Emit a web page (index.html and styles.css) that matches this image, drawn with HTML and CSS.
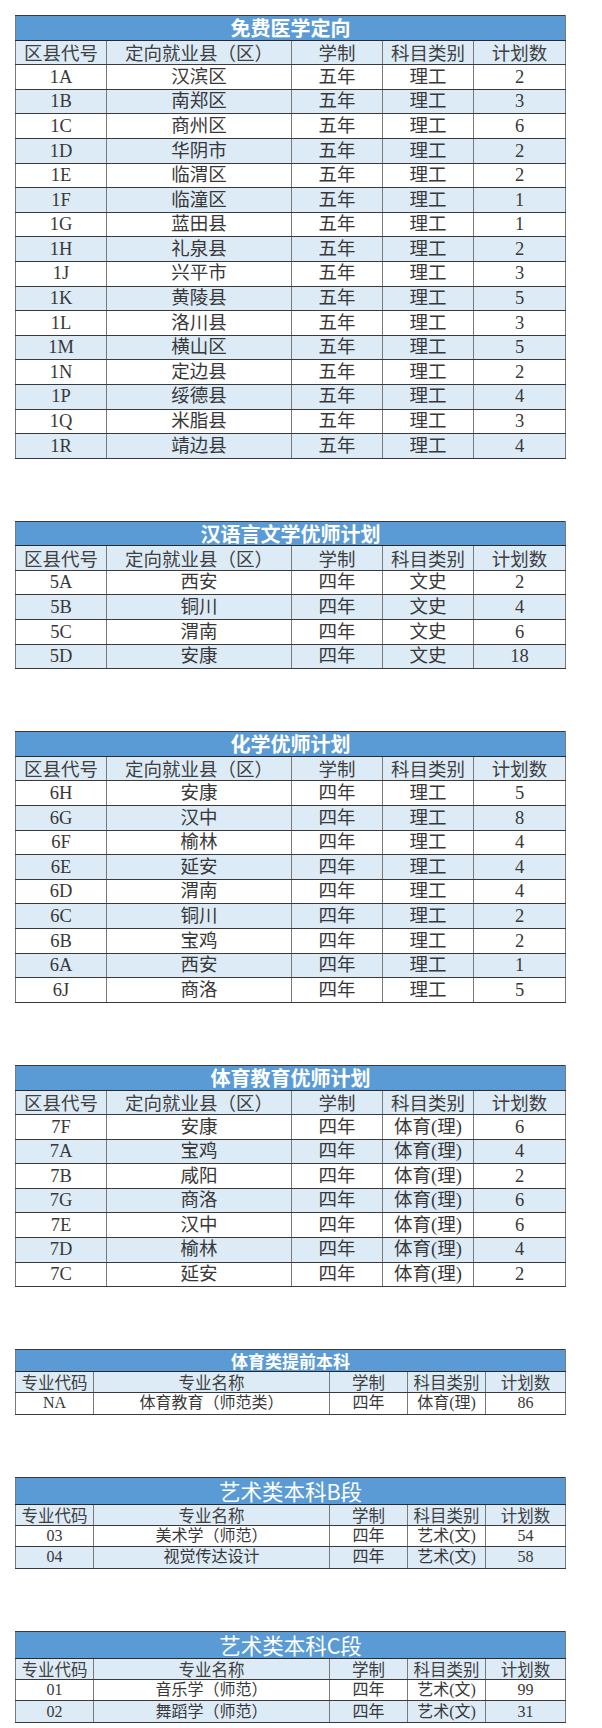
FILE: index.html
```html
<!DOCTYPE html>
<html lang="zh-CN">
<head>
<meta charset="utf-8">
<title>招生计划</title>
<link rel="stylesheet" href="styles.css">
</head>
<body>
<div class="page">

<table class="plan plan-big">
  <colgroup><col class="c1"><col class="c2"><col class="c3"><col class="c4"><col class="c5"></colgroup>
  <tr class="title"><td colspan="5">免费医学定向</td></tr>
  <tr class="head"><td>区县代号</td><td>定向就业县（区）</td><td>学制</td><td>科目类别</td><td>计划数</td></tr>
  <tr><td>1A</td><td>汉滨区</td><td>五年</td><td>理工</td><td>2</td></tr>
  <tr class="alt"><td>1B</td><td>南郑区</td><td>五年</td><td>理工</td><td>3</td></tr>
  <tr><td>1C</td><td>商州区</td><td>五年</td><td>理工</td><td>6</td></tr>
  <tr class="alt"><td>1D</td><td>华阴市</td><td>五年</td><td>理工</td><td>2</td></tr>
  <tr><td>1E</td><td>临渭区</td><td>五年</td><td>理工</td><td>2</td></tr>
  <tr class="alt"><td>1F</td><td>临潼区</td><td>五年</td><td>理工</td><td>1</td></tr>
  <tr><td>1G</td><td>蓝田县</td><td>五年</td><td>理工</td><td>1</td></tr>
  <tr class="alt"><td>1H</td><td>礼泉县</td><td>五年</td><td>理工</td><td>2</td></tr>
  <tr><td>1J</td><td>兴平市</td><td>五年</td><td>理工</td><td>3</td></tr>
  <tr class="alt"><td>1K</td><td>黄陵县</td><td>五年</td><td>理工</td><td>5</td></tr>
  <tr><td>1L</td><td>洛川县</td><td>五年</td><td>理工</td><td>3</td></tr>
  <tr class="alt"><td>1M</td><td>横山区</td><td>五年</td><td>理工</td><td>5</td></tr>
  <tr><td>1N</td><td>定边县</td><td>五年</td><td>理工</td><td>2</td></tr>
  <tr class="alt"><td>1P</td><td>绥德县</td><td>五年</td><td>理工</td><td>4</td></tr>
  <tr><td>1Q</td><td>米脂县</td><td>五年</td><td>理工</td><td>3</td></tr>
  <tr class="alt"><td>1R</td><td>靖边县</td><td>五年</td><td>理工</td><td>4</td></tr>
</table>

<table class="plan plan-big">
  <colgroup><col class="c1"><col class="c2"><col class="c3"><col class="c4"><col class="c5"></colgroup>
  <tr class="title"><td colspan="5">汉语言文学优师计划</td></tr>
  <tr class="head"><td>区县代号</td><td>定向就业县（区）</td><td>学制</td><td>科目类别</td><td>计划数</td></tr>
  <tr><td>5A</td><td>西安</td><td>四年</td><td>文史</td><td>2</td></tr>
  <tr class="alt"><td>5B</td><td>铜川</td><td>四年</td><td>文史</td><td>4</td></tr>
  <tr><td>5C</td><td>渭南</td><td>四年</td><td>文史</td><td>6</td></tr>
  <tr class="alt"><td>5D</td><td>安康</td><td>四年</td><td>文史</td><td>18</td></tr>
</table>

<table class="plan plan-big">
  <colgroup><col class="c1"><col class="c2"><col class="c3"><col class="c4"><col class="c5"></colgroup>
  <tr class="title"><td colspan="5">化学优师计划</td></tr>
  <tr class="head"><td>区县代号</td><td>定向就业县（区）</td><td>学制</td><td>科目类别</td><td>计划数</td></tr>
  <tr><td>6H</td><td>安康</td><td>四年</td><td>理工</td><td>5</td></tr>
  <tr class="alt"><td>6G</td><td>汉中</td><td>四年</td><td>理工</td><td>8</td></tr>
  <tr><td>6F</td><td>榆林</td><td>四年</td><td>理工</td><td>4</td></tr>
  <tr class="alt"><td>6E</td><td>延安</td><td>四年</td><td>理工</td><td>4</td></tr>
  <tr><td>6D</td><td>渭南</td><td>四年</td><td>理工</td><td>4</td></tr>
  <tr class="alt"><td>6C</td><td>铜川</td><td>四年</td><td>理工</td><td>2</td></tr>
  <tr><td>6B</td><td>宝鸡</td><td>四年</td><td>理工</td><td>2</td></tr>
  <tr class="alt"><td>6A</td><td>西安</td><td>四年</td><td>理工</td><td>1</td></tr>
  <tr><td>6J</td><td>商洛</td><td>四年</td><td>理工</td><td>5</td></tr>
</table>

<table class="plan plan-big">
  <colgroup><col class="c1"><col class="c2"><col class="c3"><col class="c4"><col class="c5"></colgroup>
  <tr class="title"><td colspan="5">体育教育优师计划</td></tr>
  <tr class="head"><td>区县代号</td><td>定向就业县（区）</td><td>学制</td><td>科目类别</td><td>计划数</td></tr>
  <tr><td>7F</td><td>安康</td><td>四年</td><td>体育(理)</td><td>6</td></tr>
  <tr class="alt"><td>7A</td><td>宝鸡</td><td>四年</td><td>体育(理)</td><td>4</td></tr>
  <tr><td>7B</td><td>咸阳</td><td>四年</td><td>体育(理)</td><td>2</td></tr>
  <tr class="alt"><td>7G</td><td>商洛</td><td>四年</td><td>体育(理)</td><td>6</td></tr>
  <tr><td>7E</td><td>汉中</td><td>四年</td><td>体育(理)</td><td>6</td></tr>
  <tr class="alt"><td>7D</td><td>榆林</td><td>四年</td><td>体育(理)</td><td>4</td></tr>
  <tr><td>7C</td><td>延安</td><td>四年</td><td>体育(理)</td><td>2</td></tr>
</table>

<table class="plan plan-small">
  <colgroup><col class="s1"><col class="s2"><col class="s3"><col class="s4"><col class="s5"></colgroup>
  <tr class="title title-bold"><td colspan="5">体育类提前本科</td></tr>
  <tr class="head"><td>专业代码</td><td>专业名称</td><td>学制</td><td>科目类别</td><td>计划数</td></tr>
  <tr><td>NA</td><td>体育教育（师范类）</td><td>四年</td><td>体育(理)</td><td>86</td></tr>
</table>

<table class="plan plan-small">
  <colgroup><col class="s1"><col class="s2"><col class="s3"><col class="s4"><col class="s5"></colgroup>
  <tr class="title title-large"><td colspan="5">艺术类本科B段</td></tr>
  <tr class="head"><td>专业代码</td><td>专业名称</td><td>学制</td><td>科目类别</td><td>计划数</td></tr>
  <tr><td>03</td><td>美术学（师范）</td><td>四年</td><td>艺术(文)</td><td>54</td></tr>
  <tr class="alt"><td>04</td><td>视觉传达设计</td><td>四年</td><td>艺术(文)</td><td>58</td></tr>
</table>

<table class="plan plan-small">
  <colgroup><col class="s1"><col class="s2"><col class="s3"><col class="s4"><col class="s5"></colgroup>
  <tr class="title title-large"><td colspan="5">艺术类本科C段</td></tr>
  <tr class="head"><td>专业代码</td><td>专业名称</td><td>学制</td><td>科目类别</td><td>计划数</td></tr>
  <tr><td>01</td><td>音乐学（师范）</td><td>四年</td><td>艺术(文)</td><td>99</td></tr>
  <tr class="alt"><td>02</td><td>舞蹈学（师范）</td><td>四年</td><td>艺术(文)</td><td>31</td></tr>
</table>

</div>
</body>
</html>
```

FILE: styles.css
```css
html, body {
  margin: 0;
  padding: 0;
  background: #ffffff;
}

.page {
  display: flex;
  flex-direction: column;
  align-items: flex-start;
  gap: 62px;
  padding: 15px 0 0 15px;
}

.plan {
  width: 550px;
  table-layout: fixed;
  border-collapse: collapse;
  border: 1.5px solid #1a1a1a;
  color: #383838;
  font-family: "Liberation Serif", "Noto Sans CJK SC", serif;
}

.plan td {
  padding: 0;
  text-align: center;
  vertical-align: middle;
  white-space: nowrap;
  line-height: 1;
  border-left: 1.5px solid #7a7a7a;
  border-right: 1.5px solid #7a7a7a;
  border-top: 1px solid #3a3a3a;
  border-bottom: 1px solid #3a3a3a;
}

.c1 { width: 91px; }
.c2 { width: 185px; }
.c3 { width: 91px; }
.c4 { width: 91px; }
.c5 { width: 92px; }

.s1 { width: 78px; }
.s2 { width: 236px; }
.s3 { width: 78px; }
.s4 { width: 78px; }
.s5 { width: 80px; }

.title td {
  background: #5b9bd5;
  color: #ffffff;
  font-family: "Noto Sans CJK SC", sans-serif;
  font-weight: 700;
  border-bottom: 1.5px solid #2a2a2a;
}

.head td {
  background: #ddebf7;
  color: #404040;
  font-family: "Noto Sans CJK SC", sans-serif;
  font-weight: 400;
}

.alt td {
  background: #ddebf7;
}

/* large tables */
.plan-big td {
  height: 23.6px;
  font-size: 18.5px;
}
.plan-big .title td {
  height: 23.8px;
  font-size: 20px;
}
.plan-big .head td {
  height: 23.4px;
  font-size: 18.5px;
}

/* small tables */
.plan-small td {
  height: 20.4px;
  font-size: 16px;
}
.plan-small .title td {
  height: 20.8px;
  font-size: 17px;
}
.plan-small .title-large td {
  height: 26.2px;
  font-size: 21.5px;
  font-weight: 400;
}
.plan-small .head td {
  height: 20.2px;
  font-size: 16.5px;
}
```
